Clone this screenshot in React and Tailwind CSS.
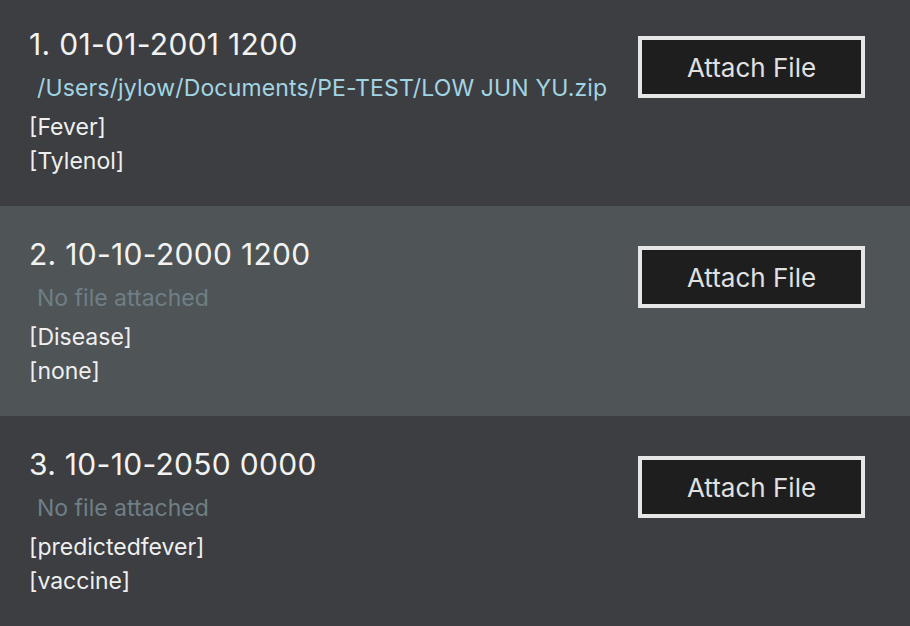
export default function App() {
  const rows = [
    { title: "1. 01-01-2001 1200", file: "/Users/jylow/Documents/PE-TEST/LOW JUN YU.zip", tags: ["[Fever]", "[Tylenol]"], cls: "bg-[#3c3e41] -mt-[4px]" },
    { title: "2. 10-10-2000 1200", file: null, tags: ["[Disease]", "[none]"], cls: "bg-[#4f5457]" },
    { title: "3. 10-10-2050 0000", file: null, tags: ["[predictedfever]", "[vaccine]"], cls: "bg-[#3c3e41]" },
  ];
  return (
    <div className="w-[910px] h-[626px] overflow-hidden bg-[#3c3e41]" style={{ fontFamily: "Inter, 'Noto Sans', sans-serif" }}>
      {rows.map((r, i) => (
        <div key={i} className={`${r.cls} h-[210px] flex justify-between pl-[29px] pr-[45px]`}>
          <div className="flex flex-col pt-[30px]">
            <div className="text-[30px] leading-[36px] tracking-[0.3px] text-[#f2f2f2]">{r.title}</div>
            {r.file ? (
              <div className="mt-[11px] pl-[8px] text-[23px] leading-[30px] tracking-[0.15px] text-[#a3d4e3]">{r.file}</div>
            ) : (
              <div className="mt-[11px] pl-[8px] text-[23px] leading-[30px] text-[#6f7f86]">No file attached</div>
            )}
            <div className="mt-[7px] flex flex-col text-[23px] leading-[34px] text-[#efefef]">
              {r.tags.map((t) => (
                <div key={t}>{t}</div>
              ))}
            </div>
          </div>
          <div className="pt-[40px]">
            <div className="w-[227px] h-[62px] border-4 border-[#e6e6e6] bg-[#1e1e1e] flex items-center justify-center text-[26px] text-[#e0e0e0]">
              Attach File
            </div>
          </div>
        </div>
      ))}
    </div>
  );
}
